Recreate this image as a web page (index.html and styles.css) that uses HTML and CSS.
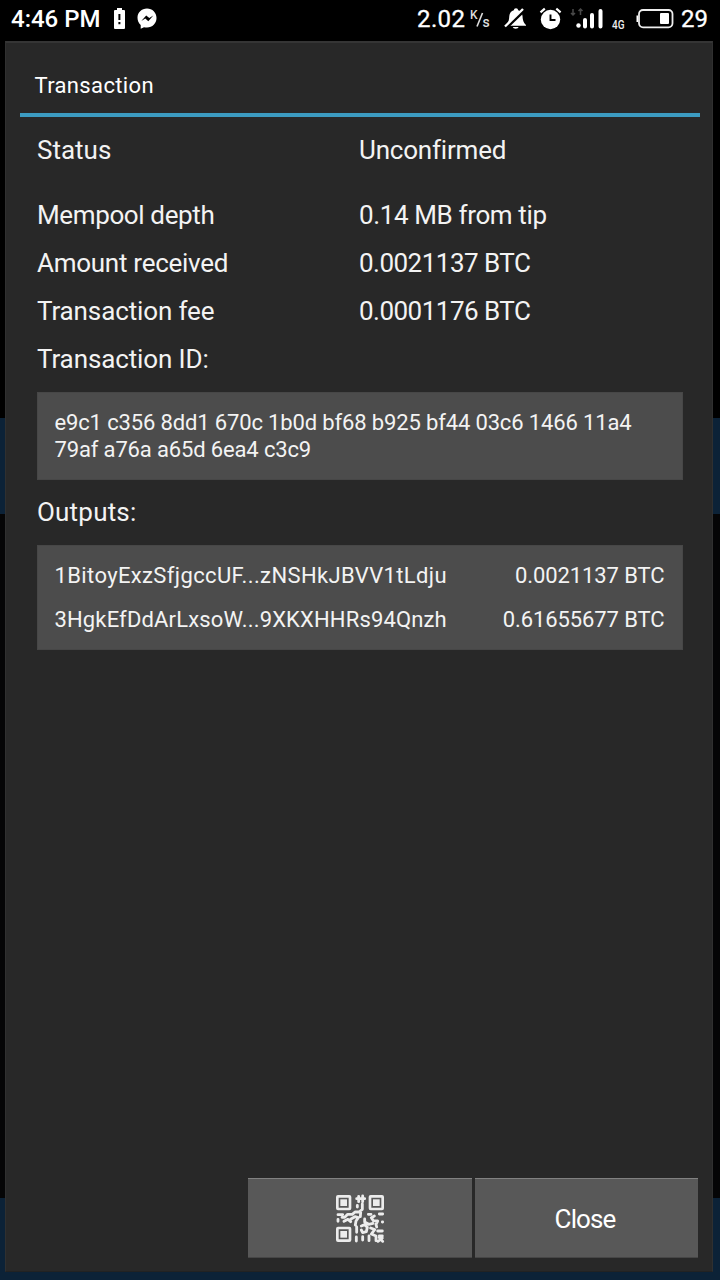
FILE: index.html
```html
<!DOCTYPE html>
<html lang="en">
<head>
<meta charset="utf-8">
<title>Transaction</title>
<link rel="stylesheet" href="styles.css">
</head>
<body>
<div class="screen">
  <header class="status-bar">
    <span class="clock">4:46 PM</span>
    <svg class="left-icons" width="46" height="38" viewBox="0 0 46 38">
      <path fill="#fff" fill-rule="evenodd" d="M4 10h2V8h5v2h2q1 0 1 1v17q0 1-1 1H4q-1 0-1-1V11q0-1 1-1zM7.400 14v6h2v-6zM7.400 22v2.200h2V22z"/>
      <path fill="#fff" fill-rule="evenodd" d="M36 8.600c-5.400 0-9.500 4-9.500 9.200 0 2.900 1.100 5.400 3.200 7.100v3.800l3.300-1.500c1 .3 2 .4 3 .4 5.400 0 9.500-4.200 9.500-9.500S41.400 8.600 36 8.600zM30.300 20.900l4.900-5.500 3.100 2.700 4-2.500-5 5.600-3-2.800z"/>
    </svg>
    <span class="rate">2.02</span>
    <svg class="unit" width="22" height="38" viewBox="0 0 22 38"><text x="1" y="18.500" font-size="12">K</text><path d="M8 26.500L13.500 13" stroke="#ddd" stroke-width="1.600"/><text x="13.500" y="27">s</text></svg>
    <svg class="right-icons" width="174" height="38" viewBox="0 0 174 38">
      <g fill="#fff">
        <path d="M4.500 24.500c2.300-2.500 2.500-4.500 2.800-8.500.2-3 2-5 4.500-5.700Q12 8.300 14 8.300t2.200 2c2.500.7 4 2.700 4.300 5.700.3 4 .8 6 3.500 9v.8H4.500zM10.700 27h6q-.5 1.700-3 1.700t-3-1.700z"/>
        <path d="M4.500 27.500L22.500 10" stroke="#000" stroke-width="3.200"/>
        <path d="M3 26.500L21 9" stroke="#fff" stroke-width="2.400"/>
        <circle cx="48.500" cy="19.500" r="9.700"/>
        <path d="M38.500 12.300l4.300-3.700M54.300 8.600l4.300 3.700" stroke="#fff" stroke-width="2.200"/>
        <path d="M48.500 14.500v5.500h5" fill="none" stroke="#000" stroke-width="1.900"/>
        <circle cx="76.500" cy="25.500" r="2.200"/>
        <path d="M83 20v6.500M90 15v11.500M98.500 11v15.500" stroke="#fff" stroke-width="4" stroke-linecap="round"/>
      </g>
      <path d="M71 9v6m-2-2l2 2 2-2M78.500 15V9m-2 2l2-2 2 2" fill="none" stroke="#494949" stroke-width="1.500"/>
      <text class="network" x="110" y="29" textLength="12.500" lengthAdjust="spacingAndGlyphs">4G</text>
      <rect x="137" y="10" width="33.500" height="17.300" rx="4" fill="none" stroke="#eee" stroke-width="1.800"/>
      <path d="M136 15.500h-1.500v6.500H136z" fill="#fff"/>
      <rect x="158" y="13" width="9" height="11" rx="1" fill="#fff"/>
    </svg>
    <span class="battery">29</span>
  </header>
  <main class="backdrop">
    <section class="dialog">
      <h1 class="title"><span>Transaction</span></h1>
      <div class="content">
        <dl class="details">
          <dt>Status</dt><dd class="state">Unconfirmed</dd>
          <dt class="depth">Mempool depth</dt><dd class="depth">0.14 MB from tip</dd>
          <dt class="received">Amount received</dt><dd class="sum">0.0021137 BTC</dd>
          <dt class="fee">Transaction fee</dt><dd class="sum">0.0001176 BTC</dd>
        </dl>
        <h2 class="label">Transaction ID:</h2>
        <div class="panel txid">e9c1 c356 8dd1 670c 1b0d bf68 b925 bf44 03c6 1466 11a4<br>79af a76a a65d 6ea4 c3c9</div>
        <h2 class="label outputs-label">Outputs:</h2>
        <div class="panel outputs">
          <div class="output"><span class="address-own">1BitoyExzSfjgccUF...zNSHkJBVV1tLdju</span><span class="amount">0.0021137 BTC</span></div>
          <div class="output"><span class="address">3HgkEfDdArLxsoW...9XKXHHRs94Qnzh</span><span class="amount">0.61655677 BTC</span></div>
        </div>
      </div>
      <footer class="actions">
        <button class="button" aria-label="QR code">
          <svg class="qr" width="50" height="50" viewBox="15 10 150 150" fill="none" stroke="#ececec">
            <g stroke-width="8"><rect x="22" y="20" width="38" height="38" rx="2"/><rect x="120" y="20" width="38" height="38" rx="2"/><rect x="22" y="115" width="38" height="38" rx="2"/></g>
            <g fill="#ececec" stroke="none"><rect x="31" y="29" width="20" height="20"/><rect x="129" y="29" width="20" height="20"/><rect x="31" y="124" width="20" height="20"/></g>
            <path stroke-width="8.500" stroke-linecap="round" stroke-linejoin="round" d="M86 20v16M98 19v17M80 27h24M97 43v16l-10 8H75l-8 7H53l-9 9h-8M82 47v5M24 75h14M24 89v6M42 95l12-6 8 7M63 88l12-7 10 3-7 10-2 12M92 68l-1 13M115 74h8M148 73h10M133 79l-9 5 6 9 13 1-5 10 2 8M104 88v9l12 7 13-3M157 97h1M80 112v16M94 109l10-4 8 8-3 13-11 3-4-8M122 115l12 5-10 13 14 6v14M143 124h14M79 142v12M98 141v10M117 139v14M148 139h9M157 145l-13 10M148 144l10 11"/>
          </svg>
        </button>
        <button class="button button-close"><span class="close">Close</span></button>
      </footer>
    </section>
  </main>
</div>
</body>
</html>
```
FILE: styles.css
```css
* { box-sizing: border-box; }
body { margin: 0; background: #000; color: #f3f3f3; font-family: Roboto, sans-serif; font-variant-ligatures: none; }
.screen { width: 720px; height: 1280px; display: flex; flex-direction: column; overflow: hidden; }
.status-bar { height: 40px; padding: 0 11px 0 11px; display: flex; align-items: flex-start; color: #fff; font-size: 24px; line-height: 38px; font-weight: 500; white-space: nowrap; }
.status-bar svg { flex: none; }
.clock { width: 90px; }
.left-icons { margin-left: 10px; }
.rate { margin-left: auto; width: 48px; letter-spacing: .4px; font-weight: 400; -webkit-text-stroke: .3px #fff; }
.unit { margin-left: 4px; fill: #ddd; font-size: 14px; font-weight: 500; }
.right-icons { margin-left: 11px; }
.network { fill: #eee; font-size: 12px; font-weight: 500; }
.battery { width: 28px; margin-left: 5px; font-weight: 400; -webkit-text-stroke: .3px #fff; }
.backdrop { height: 1240px; padding: 1px 7px 8px 5px; background: linear-gradient(#000 378px, #0c2237 378px 474px, #050506 474px 1158px, #0c2237 1158px); }
.dialog { height: 1231px; background: #282828; border: 1px solid #303030; border-top: 2px solid #353535; border-bottom-color: #222; display: flex; flex-direction: column; }
.title { margin: 0 12px 0 14px; height: 74px; border-bottom: 4px solid #3c9bc1; padding: 29px 0 0 14.500px; color: #fff; font-size: 22px; line-height: 28px; font-weight: 400; letter-spacing: .35px; }
.content { padding: 9px 29px 0 31px; }
.details { margin: 0; display: grid; grid-template-columns: 322px 1fr; grid-template-rows: 65px repeat(3, 48px); font-size: 26px; line-height: 48px; }
.details dd { margin: 0; }
.state { letter-spacing: -.2px; }
.depth { letter-spacing: -.37px; }
.received { letter-spacing: -.27px; }
.sum { letter-spacing: -.52px; }
.fee { letter-spacing: -.13px; }
.label { margin: 0; height: 48px; font-size: 26px; line-height: 48px; font-weight: 400; letter-spacing: -.12px; }
.panel { background: #4c4c4c; border: 1px solid #474747; padding: 16px 17px 0 16.500px; font-size: 22px; }
.txid { height: 88px; margin-top: 9px; line-height: 27px; letter-spacing: -.145px; white-space: nowrap; }
.outputs-label { margin-top: 8px; letter-spacing: .2px; }
.outputs { height: 105px; margin-top: 9px; padding-top: 8px; }
.output { height: 44px; display: flex; justify-content: space-between; line-height: 44px; }
.address-own { letter-spacing: .37px; }
.address { letter-spacing: .15px; }
.amount { letter-spacing: -.1px; margin-right: .5px; }
.actions { margin: auto 14px 13px 0; display: flex; justify-content: flex-end; gap: 3px; }
.button { width: 224px; height: 80px; padding: 0; border: 0; border-top: 1px solid #818181; border-bottom: 1px solid #464646; background: #585858; color: #fff; font: 26px Roboto, sans-serif; display: flex; align-items: center; justify-content: center; }
.button-close { width: 223px; }
.close { letter-spacing: -.9px; padding: 1px 3px 0 0; }
```
